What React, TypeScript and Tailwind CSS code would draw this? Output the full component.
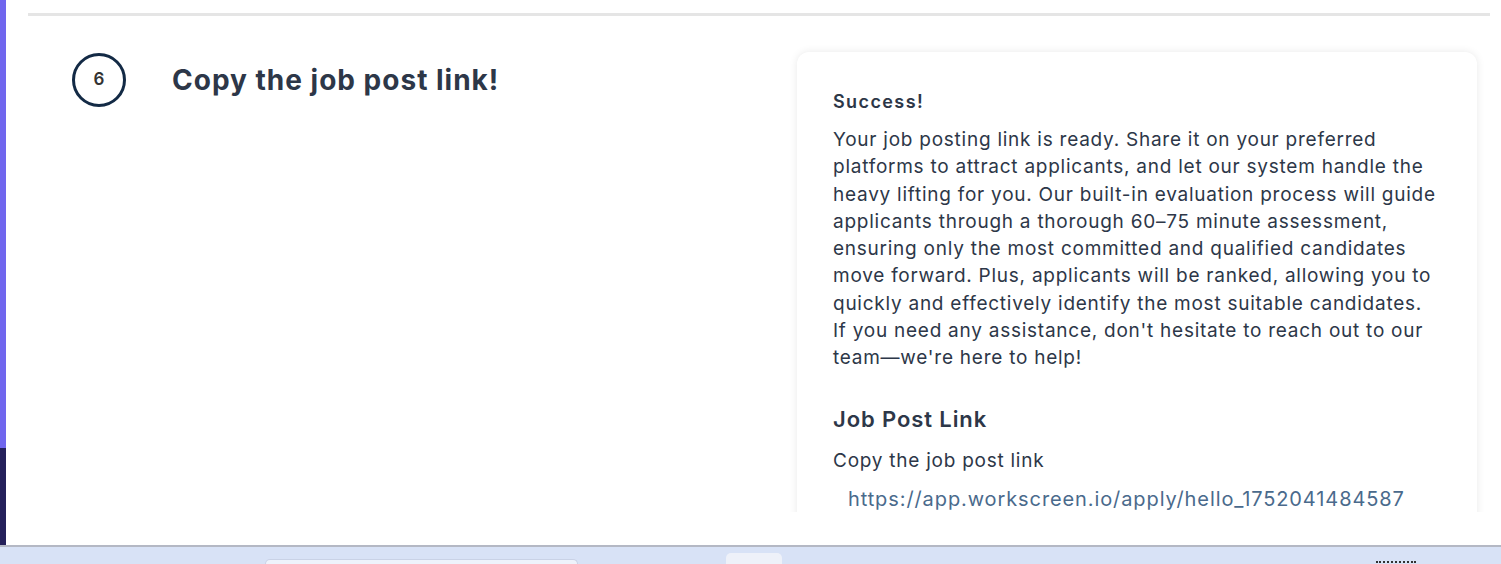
const paragraph = [
  'Your job posting link is ready. Share it on your preferred',
  'platforms to attract applicants, and let our system handle the',
  'heavy lifting for you. Our built-in evaluation process will guide',
  'applicants through a thorough 60–75 minute assessment,',
  'ensuring only the most committed and qualified candidates',
  'move forward. Plus, applicants will be ranked, allowing you to',
  'quickly and effectively identify the most suitable candidates.',
  "If you need any assistance, don't hesitate to reach out to our",
  "team—we're here to help!",
];

export default function App() {
  return (
    <div className="flex h-[564px] w-full flex-col overflow-hidden bg-white font-['Inter',sans-serif] text-[#2d3748]">
      <div className="flex h-[545px] w-full">
        {/* sidebar edge */}
        <div className="flex w-[6px] shrink-0 flex-col">
          <div className="h-[448px] bg-[#7066ee]" />
          <div className="flex-1 bg-[#24205a]" />
        </div>

        <main className="flex flex-1 flex-col">
          <div className="h-[512px] overflow-hidden px-[22px] pt-[13px]">
            <div className="h-[3px] w-[1462px] bg-[#e5e5e5]" />

            <section className="flex pt-[36px]">
              <div className="flex w-[769px] shrink-0 items-start pl-[44px] pt-[1px]">
                <div className="flex h-[54px] w-[54px] items-center justify-center rounded-full border-[3px] border-[#132a45] text-[17px] font-semibold text-[#333]">
                  6
                </div>
                <h2 className="ml-[46px] mt-[8px] whitespace-nowrap text-[28px] font-bold leading-[38px] tracking-[1px]">
                  Copy the job post link!
                </h2>
              </div>

              <div className="w-[680px] shrink-0 rounded-[12px] bg-white px-[36px] pt-[37px] pb-10 shadow-[0_0_8px_rgba(0,0,0,0.09)]">
                <h3 className="text-[18px] font-semibold leading-[26px] tracking-[1.4px]">Success!</h3>
                <p className="mt-[11px] text-[19px] leading-[27.3px] tracking-[0.75px]">
                  {paragraph.map((line) => (
                    <span key={line} className="block whitespace-nowrap">
                      {line}
                    </span>
                  ))}
                </p>

                <h3 className="mt-[32px] text-[22px] font-semibold leading-[30px] tracking-[0.9px]">
                  Job Post Link
                </h3>
                <p className="mt-[14px] text-[19px] leading-[26px] tracking-[0.75px]">Copy the job post link</p>
                <a className="ml-[15px] mt-[11px] block whitespace-nowrap text-[20px] leading-[28px] tracking-[0.9px] text-[#4a6a8c]">
                  https://app.workscreen.io/apply/hello_1752041484587
                </a>
              </div>
            </section>
          </div>
        </main>
      </div>

      {/* taskbar */}
      <div className="flex h-[19px] items-end border-t-2 border-[#b4b8c4] bg-[#d8e2f6]">
        <div className="ml-[265px] h-[5px] w-[313px] rounded-t-[10px] border border-b-0 border-[#c9d2e6] bg-[#eef2fb]" />
        <div className="ml-[148px] h-[11px] w-[56px] rounded-t-[5px] bg-[#eef1f9]" />
        <div className="ml-auto mr-[85px] h-[3px] w-[40px] self-end border-t-2 border-dotted border-[#333]" />
      </div>
    </div>
  );
}
